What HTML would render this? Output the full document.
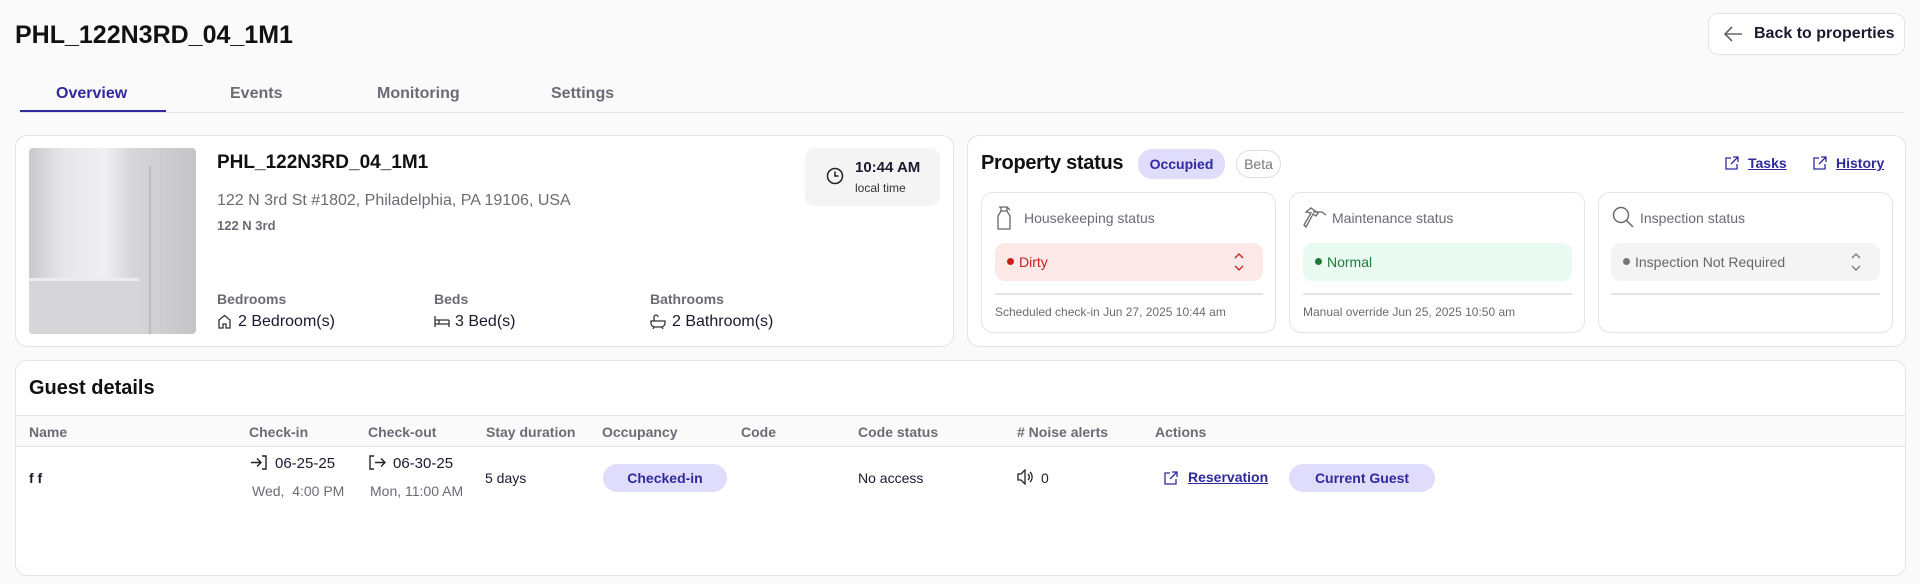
<!DOCTYPE html>
<html><head><meta charset="utf-8"><style>
*{box-sizing:border-box;margin:0;padding:0}
body{width:1920px;height:584px;background:#fafafa;font-family:"Liberation Sans",Arial,sans-serif;color:#1a1a2e;position:relative;overflow:hidden}
.a{position:absolute;white-space:nowrap}
.card{position:absolute;background:#fff;border:1px solid #e4e4e7;border-radius:12px}
.g{color:#6b6b76}
.lnk{color:#2f2a9e;text-decoration:underline;font-weight:bold;font-size:14px}
.pill{position:absolute;border-radius:14px;background:#e0dcfb;color:#2f2a9e;font-weight:bold;font-size:14px;display:flex;align-items:center;justify-content:center}
svg{position:absolute}
</style></head><body>
<div class="a" style="left:15px;top:21px;font-size:25px;font-weight:bold;color:#111">PHL_122N3RD_04_1M1</div>
<div style="position:absolute;left:1708px;top:13px;width:197px;height:42px;background:#fff;border:1px solid #e4e4e7;border-radius:10px"></div>
<svg style="left:1722px;top:24px" width="22" height="20" viewBox="0 0 22 20"><path d="M20 10H3M10 3L3 10l7 7" fill="none" stroke="#666" stroke-width="1.6"/></svg>
<div class="a" style="left:1754px;top:25px;font-size:16px;font-weight:bold;color:#1a1a2e">Back to properties</div>

<div class="a" style="left:56px;top:85px;font-size:16px;font-weight:bold;color:#2f2a9e">Overview</div>
<div class="a g" style="left:230px;top:85px;font-size:16px;font-weight:bold">Events</div>
<div class="a g" style="left:377px;top:85px;font-size:16px;font-weight:bold">Monitoring</div>
<div class="a g" style="left:551px;top:85px;font-size:16px;font-weight:bold">Settings</div>
<div style="position:absolute;left:20px;top:112px;width:1885px;height:1px;background:#e4e4e7"></div>
<div style="position:absolute;left:20px;top:110px;width:146px;height:2px;background:#2f2a9e"></div>

<div class="card" style="left:15px;top:135px;width:939px;height:212px"></div>
<div style="position:absolute;left:29px;top:148px;width:167px;height:186px;border-radius:4px;overflow:hidden;background:linear-gradient(90deg,#c9c9cc 0%,#e6e6e8 20%,#f0f0f2 45%,#d8d8db 60%,#c4c4c7 100%)">
<div style="position:absolute;left:0;top:130px;width:110px;height:56px;background:#d6d6d9;border-top:3px solid #ececee"></div>
<div style="position:absolute;left:120px;top:18px;width:2px;height:168px;background:#bdbdc0"></div>
</div>
<div class="a" style="left:217px;top:152px;font-size:19px;font-weight:bold;color:#111">PHL_122N3RD_04_1M1</div>
<div class="a g" style="left:217px;top:192px;font-size:16px">122 N 3rd St #1802, Philadelphia, PA 19106, USA</div>
<div class="a g" style="left:217px;top:218px;font-size:13px;font-weight:bold">122 N 3rd</div>
<div class="a g" style="left:217px;top:291px;font-size:14px;font-weight:bold">Bedrooms</div>
<div class="a g" style="left:434px;top:291px;font-size:14px;font-weight:bold">Beds</div>
<div class="a g" style="left:650px;top:291px;font-size:14px;font-weight:bold">Bathrooms</div>
<svg style="left:217px;top:314px" width="15" height="15" viewBox="0 0 15 15"><path d="M2 14V6l5.5-4.5L13 6v8H9V10H6v4z" fill="none" stroke="#333" stroke-width="1.3"/></svg>
<div class="a" style="left:238px;top:313px;font-size:16px">2 Bedroom(s)</div>
<svg style="left:434px;top:315px" width="16" height="13" viewBox="0 0 16 13"><path d="M1 1v11M15 5v7M1 5h14M1 9h14M5 5v4" fill="none" stroke="#333" stroke-width="1.3"/></svg>
<div class="a" style="left:455px;top:313px;font-size:16px">3 Bed(s)</div>
<svg style="left:650px;top:314px" width="16" height="15" viewBox="0 0 16 15"><path d="M1 7h14v2a4 4 0 0 1-4 4H5a4 4 0 0 1-4-4zM4 7V3a2 2 0 0 1 4 0M4 13l-1 2M12 13l1 2" fill="none" stroke="#333" stroke-width="1.3"/></svg>
<div class="a" style="left:672px;top:313px;font-size:16px">2 Bathroom(s)</div>
<div style="position:absolute;left:805px;top:148px;width:135px;height:58px;border-radius:10px;background:#f4f4f5"></div>
<svg style="left:826px;top:167px" width="18" height="18" viewBox="0 0 18 18"><circle cx="9" cy="9" r="7.5" fill="none" stroke="#222" stroke-width="1.5"/><path d="M9 4.5V9h3.5" fill="none" stroke="#222" stroke-width="1.5"/></svg>
<div class="a" style="left:855px;top:159px;font-size:15px;font-weight:bold">10:44 AM</div>
<div class="a" style="left:855px;top:181px;font-size:12px;color:#333">local time</div>

<div class="card" style="left:967px;top:135px;width:939px;height:212px"></div>
<div class="a" style="left:981px;top:152px;font-size:20px;font-weight:bold;color:#111;letter-spacing:-0.3px">Property status</div>
<div class="pill" style="left:1138px;top:149px;width:87px;height:30px;font-size:14px">Occupied</div>
<div class="pill" style="left:1236px;top:150px;width:45px;height:28px;background:#fff;border:1px solid #ddd;color:#777;font-weight:normal;font-size:14px">Beta</div>
<svg style="left:1725px;top:156px" width="14" height="14" viewBox="0 0 14 14"><path d="M6 2H1v11h11V8M8 1h5v5M13 1L6 8" fill="none" stroke="#2f2a9e" stroke-width="1.3"/></svg>
<div class="a lnk" style="left:1748px;top:155px">Tasks</div>
<svg style="left:1813px;top:156px" width="14" height="14" viewBox="0 0 14 14"><path d="M6 2H1v11h11V8M8 1h5v5M13 1L6 8" fill="none" stroke="#2f2a9e" stroke-width="1.3"/></svg>
<div class="a lnk" style="left:1836px;top:155px">History</div>

<div class="card" style="left:981px;top:192px;width:295px;height:141px"></div>
<div class="card" style="left:1289px;top:192px;width:296px;height:141px"></div>
<div class="card" style="left:1598px;top:192px;width:295px;height:141px"></div>
<svg style="left:995px;top:206px" width="18" height="24" viewBox="0 0 18 24"><path d="M4 1h8l3 3M6 1v4M12 1v4M6 5h6l3 5v13H3V10z" fill="none" stroke="#666" stroke-width="1.3"/></svg>
<div class="a g" style="left:1024px;top:210px;font-size:14px">Housekeeping status</div>
<svg style="left:1303px;top:206px" width="24" height="24" viewBox="0 0 24 24"><path d="M3 6l5-4 7 5-2 3-3-2L3 21l-2-2 7-12zM10 6l9 0 4 3" fill="none" stroke="#666" stroke-width="1.3"/></svg>
<div class="a g" style="left:1332px;top:210px;font-size:14px">Maintenance status</div>
<svg style="left:1612px;top:206px" width="22" height="22" viewBox="0 0 22 22"><circle cx="9" cy="9" r="7.5" fill="none" stroke="#666" stroke-width="1.4"/><path d="M14.5 14.5L21 21" stroke="#666" stroke-width="1.4"/></svg>
<div class="a g" style="left:1640px;top:210px;font-size:14px">Inspection status</div>

<div style="position:absolute;left:995px;top:243px;width:268px;height:38px;border-radius:10px;background:#fde8e8"></div>
<div style="position:absolute;left:1007px;top:258px;width:7px;height:7px;border-radius:50%;background:#c81e1e"></div>
<div class="a" style="left:1019px;top:254px;font-size:14px;color:#c81e1e">Dirty</div>
<svg style="left:1233px;top:251px" width="12" height="22" viewBox="0 0 12 22"><path d="M2 7l4-4 4 4M2 15l4 4 4-4" fill="none" stroke="#c81e1e" stroke-width="1.3"/></svg>
<div style="position:absolute;left:1303px;top:243px;width:269px;height:38px;border-radius:10px;background:#e9faf0"></div>
<div style="position:absolute;left:1315px;top:258px;width:7px;height:7px;border-radius:50%;background:#1f7a3a"></div>
<div class="a" style="left:1327px;top:254px;font-size:14px;color:#1f7a3a">Normal</div>
<div style="position:absolute;left:1611px;top:243px;width:269px;height:38px;border-radius:10px;background:#f4f4f5"></div>
<div style="position:absolute;left:1623px;top:258px;width:7px;height:7px;border-radius:50%;background:#777"></div>
<div class="a" style="left:1635px;top:254px;font-size:14px;color:#666">Inspection Not Required</div>
<svg style="left:1850px;top:251px" width="12" height="22" viewBox="0 0 12 22"><path d="M2 7l4-4 4 4M2 15l4 4 4-4" fill="none" stroke="#777" stroke-width="1.3"/></svg>
<div style="position:absolute;left:995px;top:293px;width:268px;height:2px;background:#e4e4e7"></div>
<div style="position:absolute;left:1303px;top:293px;width:269px;height:2px;background:#e4e4e7"></div>
<div style="position:absolute;left:1611px;top:293px;width:269px;height:2px;background:#e4e4e7"></div>
<div class="a g" style="left:995px;top:305px;font-size:12px">Scheduled check-in Jun 27, 2025 10:44 am</div>
<div class="a g" style="left:1303px;top:305px;font-size:12px">Manual override Jun 25, 2025 10:50 am</div>

<div class="card" style="left:15px;top:360px;width:1891px;height:216px;overflow:hidden">
<div style="position:absolute;left:0;top:54px;width:100%;height:32px;background:#fafafa;border-top:1px solid #e4e4e7;border-bottom:1px solid #e4e4e7"></div>
</div>
<div class="a" style="left:29px;top:377px;font-size:20px;font-weight:bold;color:#111">Guest details</div>
<div class="a g" style="left:29px;top:424px;font-size:14px;font-weight:bold">Name</div>
<div class="a g" style="left:249px;top:424px;font-size:14px;font-weight:bold">Check-in</div>
<div class="a g" style="left:368px;top:424px;font-size:14px;font-weight:bold">Check-out</div>
<div class="a g" style="left:486px;top:424px;font-size:14px;font-weight:bold">Stay duration</div>
<div class="a g" style="left:602px;top:424px;font-size:14px;font-weight:bold">Occupancy</div>
<div class="a g" style="left:741px;top:424px;font-size:14px;font-weight:bold">Code</div>
<div class="a g" style="left:858px;top:424px;font-size:14px;font-weight:bold">Code status</div>
<div class="a g" style="left:1017px;top:424px;font-size:14px;font-weight:bold"># Noise alerts</div>
<div class="a g" style="left:1155px;top:424px;font-size:14px;font-weight:bold">Actions</div>
<div class="a" style="left:29px;top:470px;font-size:14px;font-weight:bold">f f</div>
<svg style="left:250px;top:455px" width="17" height="15" viewBox="0 0 17 15"><path d="M1 7.5h10M7 3.5l4 4-4 4M12 1h4v13h-4" fill="none" stroke="#222" stroke-width="1.4"/></svg>
<div class="a" style="left:275px;top:455px;font-size:15px">06-25-25</div>
<div class="a g" style="left:252px;top:483px;font-size:14px">Wed,&nbsp; 4:00 PM</div>
<svg style="left:369px;top:455px" width="17" height="15" viewBox="0 0 17 15"><path d="M5 1H1v13h4M6 7.5h10M12 3.5l4 4-4 4" fill="none" stroke="#222" stroke-width="1.4"/></svg>
<div class="a" style="left:393px;top:455px;font-size:15px">06-30-25</div>
<div class="a g" style="left:370px;top:483px;font-size:14px">Mon, 11:00 AM</div>
<div class="a" style="left:485px;top:470px;font-size:14px">5 days</div>
<div class="pill" style="left:603px;top:464px;width:124px;height:28px">Checked-in</div>
<div class="a" style="left:858px;top:470px;font-size:14px">No access</div>
<svg style="left:1017px;top:469px" width="18" height="16" viewBox="0 0 18 16"><path d="M1 5h3l4-4v14l-4-4H1zM11 5a4 4 0 0 1 0 6M13 3a7 7 0 0 1 0 10" fill="none" stroke="#222" stroke-width="1.3"/></svg>
<div class="a" style="left:1041px;top:470px;font-size:14px">0</div>
<svg style="left:1164px;top:471px" width="14" height="14" viewBox="0 0 14 14"><path d="M6 2H1v11h11V8M8 1h5v5M13 1L6 8" fill="none" stroke="#2f2a9e" stroke-width="1.3"/></svg>
<div class="a lnk" style="left:1188px;top:469px">Reservation</div>
<div class="pill" style="left:1289px;top:464px;width:146px;height:28px">Current Guest</div>
</body></html>
